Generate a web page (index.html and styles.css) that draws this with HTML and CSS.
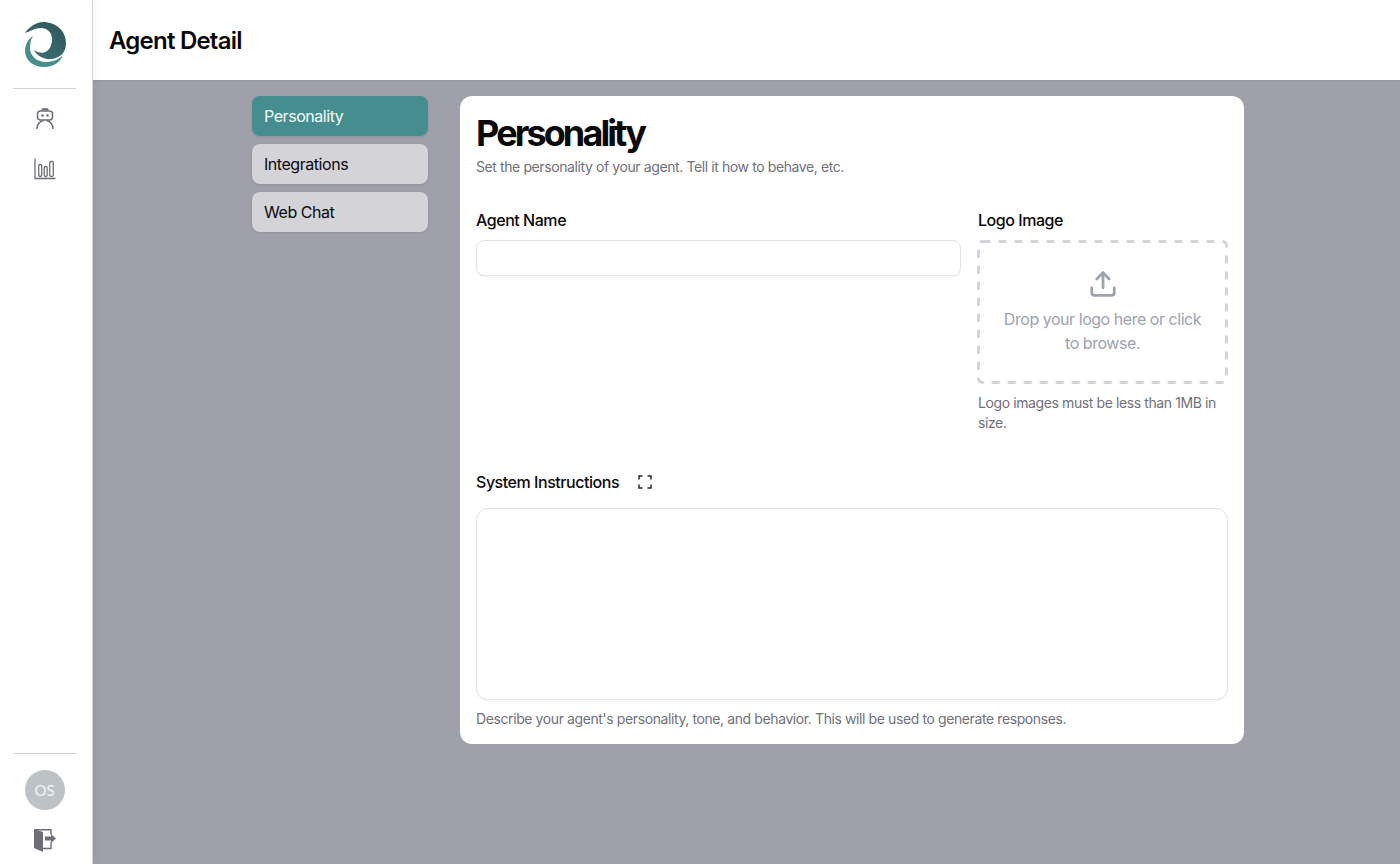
FILE: index.html
```html
<!DOCTYPE html>
<html lang="en">
<head>
<meta charset="utf-8">
<title>Agent Detail</title>
<link rel="stylesheet" href="styles.css">
</head>
<body>
<div class="app">
  <aside class="sidebar">
    <div class="logo-wrap">
      <svg class="logo" width="41" height="45" viewBox="0 0 41 45">
        <defs>
          <linearGradient id="lg" x1="0" y1="1" x2="1" y2="0">
            <stop offset="0" stop-color="#3d7177"/>
            <stop offset="1" stop-color="#2d565c"/>
          </linearGradient>
        </defs>
        <path fill="url(#lg)" d="M0 11C4 5 11 0 18 0 31 0 41 9 41 21 41 30 36 36 26 37 19 38 11 33 9 28 13 31 17 31 19 30.500 24 29 27 24 27 17 27 10 22 6 16 6 10 6 6 9 0 11Z"/>
        <path fill="#45908f" d="M8 14C3 17 0 23 0 29 0 38 8 45 19 45 28 45 35 41 38 33 33 38 27 40 21 40 11 40 5 33 5 26 5 21 6 17 8 14Z"/>
      </svg>
    </div>
    <div class="side-rule"></div>
    <nav class="side-nav">
      <a class="side-icon" aria-label="Agents">
        <svg width="18" height="22" viewBox="0 0 18 22" fill="none" stroke="#6d6e78" stroke-width="1.500">
          <path d="M6.500 1.200h5" stroke-width="2" stroke-linecap="round"/>
          <rect x="1.500" y="3" width="15" height="9" rx="3"/>
          <circle cx="6.500" cy="7.500" r="1.300" fill="#6d6e78" stroke="none"/>
          <circle cx="11.500" cy="7.500" r="1.300" fill="#6d6e78" stroke="none"/>
          <path d="M1 21c0-4 2.500-7.500 6.500-8.500M17 21c0-4-2.500-7.500-6.500-8.500"/>
        </svg>
      </a>
      <a class="side-icon" aria-label="Analytics">
        <svg width="22" height="22" viewBox="0 0 22 22" fill="none" stroke="#6d6e78" stroke-width="1.300">
          <path d="M1 .500V20.500H21.500"/>
          <rect x="4.700" y="6.500" width="3" height="12" rx="1.400"/>
          <rect x="10.200" y="8.500" width="3" height="10" rx="1.400"/>
          <rect x="15.700" y="3.500" width="3.600" height="15" rx="1.500"/>
        </svg>
      </a>
    </nav>
    <div class="side-bottom">
      <div class="side-rule"></div>
      <div class="avatar">OS</div>
      <a class="logout" aria-label="Log out">
        <svg width="24" height="24" viewBox="0 0 24 24">
          <path fill="#6d6e78" d="M1 1 10 4V24L1 20Z"/>
          <path fill="none" stroke="#6d6e78" stroke-width="1.400" d="M1 1.700H18V6.500M18 14V20.500H10"/>
          <path fill="#6d6e78" d="M12 8.500H18V6L23 10.500 18 15V12.500H12Z"/>
        </svg>
      </a>
    </div>
  </aside>
  <div class="page">
    <header class="topbar"><h1 class="topbar-title">Agent Detail</h1></header>
    <main class="main">
      <nav class="tabs">
        <a class="tab tab-active">Personality</a>
        <a class="tab">Integrations</a>
        <a class="tab">Web Chat</a>
      </nav>
      <section class="card">
        <h2 class="card-title">Personality</h2>
        <p class="hint card-sub">Set the personality of your agent. Tell it how to behave, etc.</p>
        <div class="form-row">
          <div class="field-name">
            <label class="label">Agent Name</label>
            <input class="input" type="text">
          </div>
          <div class="field-logo">
            <label class="label logo-label">Logo Image</label>
            <div class="drop">
              <svg class="drop-border" width="251" height="144" viewBox="0 0 251 144" fill="none">
                <rect x="1.500" y="1.500" width="248" height="141" rx="4" stroke="#d1d5db" stroke-width="3" stroke-dasharray="8 8"/>
              </svg>
              <svg width="30" height="30" viewBox="0 0 24 24" fill="none" stroke="#9ca3af" stroke-width="2.200" stroke-linecap="round" stroke-linejoin="round">
                <path d="M21 15v4a2 2 0 0 1-2 2H5a2 2 0 0 1-2-2v-4"/>
                <path d="M17 8l-5-5-5 5"/>
                <path d="M12 3v12"/>
              </svg>
              <p class="drop-text">Drop your logo here or click to browse.</p>
            </div>
            <p class="hint logo-hint">Logo images must be less than 1MB in size.</p>
          </div>
        </div>
        <div class="sys-head">
          <label class="label">System Instructions</label>
          <svg class="expand" width="14" height="14" viewBox="0 0 14 14" fill="none" stroke="#27272a" stroke-width="1.500">
            <path d="M1 4.500V1H4.500M9.500 1H13V4.500M13 9.500V13H9.500M4.500 13H1V9.500"/>
          </svg>
        </div>
        <textarea class="textarea"></textarea>
        <p class="hint sys-hint">Describe your agent's personality, tone, and behavior. This will be used to generate responses.</p>
      </section>
    </main>
  </div>
</div>
</body>
</html>
```
FILE: styles.css
```css
* { box-sizing: border-box; }
html, body { margin: 0; height: 100%; }
body { font-family: Inter, "Liberation Sans", sans-serif; color: #09090b; background: #fff; overflow: hidden; }
.app { display: flex; height: 864px; }
.sidebar { width: 93px; flex: none; display: flex; flex-direction: column; align-items: center; background: #fff; border-right: 1px solid #d4d4d8; padding: 0 16px 12px 13px; position: relative; z-index: 2; box-shadow: 2px 0 8px rgba(0,0,0,.05); }
.logo-wrap { height: 88px; display: flex; align-items: center; justify-content: center; width: 100%; padding-top: 1px; padding-left: 1px; }
.logo { display: block; }
.side-rule { width: 63px; height: 1px; background: #d4d4d8; flex: none; }
.side-nav { display: flex; flex-direction: column; align-items: center; gap: 26px; padding-top: 18px; }
.side-icon { display: flex; width: 24px; height: 24px; align-items: center; justify-content: center; }
.side-bottom { margin-top: auto; display: flex; flex-direction: column; align-items: center; }
.avatar { width: 40px; height: 40px; margin-top: 16px; border-radius: 50%; background: #bcc2c6; color: #f4f5f6; font-family: Lato, sans-serif; font-size: 15px; display: flex; align-items: center; justify-content: center; }
.logout { display: block; height: 24px; margin-top: 18px; }
.page { flex: 1; display: flex; flex-direction: column; min-width: 0; }
.topbar { height: 80px; flex: none; display: flex; align-items: center; padding-left: 16px; background: #fff; box-shadow: 0 1px 2px rgba(0,0,0,.08); position: relative; }
.topbar-title { margin: 0; font-size: 24px; font-weight: 600; letter-spacing: -.77px; color: #09090b; }
.main { flex: 1; display: flex; align-items: flex-start; gap: 32px; padding: 16px 0 0 159px; background: #9fa0aa; }
.tabs { width: 176px; flex: none; display: flex; flex-direction: column; gap: 8px; }
.tab { height: 40px; display: flex; align-items: center; padding: 0 12px; border-radius: 8px; background: #d4d4d8; color: #09090b; font-size: 16px; letter-spacing: -.45px; box-shadow: 0 1px 3px rgba(0,0,0,.1); }
.tab-active { background: #458d8f; color: #f0fdfa; }
.card { width: 784px; height: 648px; flex: none; background: #fff; border-radius: 12px; padding: 16px; }
.card-title { margin: 0; font-size: 36px; line-height: 42px; font-weight: 700; letter-spacing: -2.9px; color: #09090b; }
.hint { margin: 0; font-size: 14px; line-height: 20px; color: #71717a; letter-spacing: -.4px; }
.card-sub { margin-top: 3px; }
.form-row { display: flex; gap: 16px; margin-top: 31px; height: 262px; }
.field-name { flex: 1; min-width: 0; }
.field-logo { width: 251px; flex: none; }
.label { display: block; font-size: 16px; line-height: 24px; font-weight: 500; color: #09090b; letter-spacing: -.46px; }
.logo-label { padding-left: 1px; }
.input { display: block; width: 100%; height: 36px; margin-top: 8px; background: #fff; border: 1px solid #e4e4e7; border-radius: 8px; box-shadow: 0 1px 2px rgba(0,0,0,.05); }
.drop { position: relative; margin-top: 8px; height: 144px; display: flex; flex-direction: column; align-items: center; padding: 29px 19px 0; }
.drop-border { position: absolute; left: 0; top: 0; }
.drop-text { margin: 8px 0 0; font-size: 16px; line-height: 24px; color: #9ca3af; text-align: center; letter-spacing: -.46px; }
.logo-hint { margin-top: 9px; padding-left: 1px; }
.sys-head { display: flex; align-items: center; gap: 19px; height: 24px; }
.expand { display: block; }
.textarea { display: block; width: 100%; height: 192px; margin-top: 14px; resize: none; background: #fff; border: 1px solid #e4e4e7; border-radius: 12px; box-shadow: 0 1px 2px rgba(0,0,0,.05); }
.sys-hint { margin-top: 9px; }
```
